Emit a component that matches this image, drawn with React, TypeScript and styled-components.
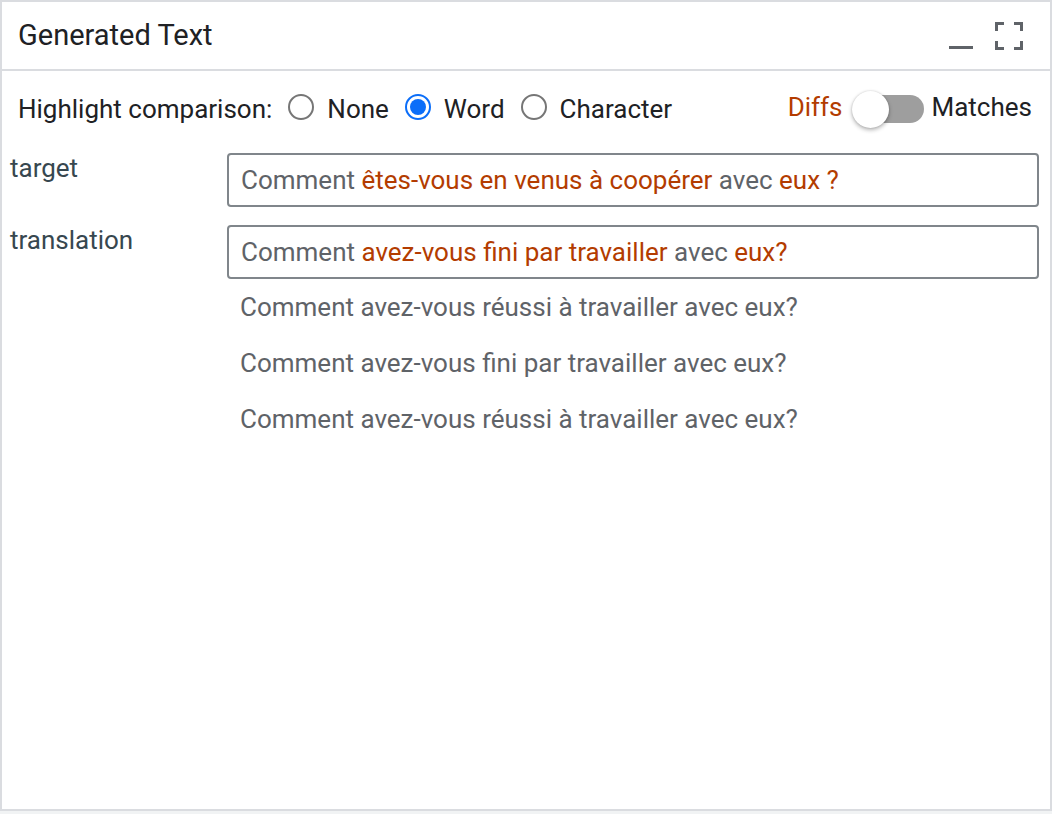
import React from 'react';
import styled, { createGlobalStyle } from 'styled-components';

const GlobalStyle = createGlobalStyle`
  html, body {
    margin: 0;
    padding: 0;
    background: #f1f3f4;
  }
  * {
    box-sizing: border-box;
  }
`;

const HIGHLIGHT = '#b33c00';

type Segment = { text: string; diff?: boolean };

const target: Segment[] = [
  { text: 'Comment ' },
  { text: 'êtes-vous en venus à coopérer', diff: true },
  { text: ' avec ' },
  { text: 'eux ?', diff: true },
];

const translation: Segment[] = [
  { text: 'Comment ' },
  { text: 'avez-vous fini par travailler', diff: true },
  { text: ' avec ' },
  { text: 'eux?', diff: true },
];

const candidates = [
  'Comment avez-vous réussi à travailler avec eux?',
  'Comment avez-vous fini par travailler avec eux?',
  'Comment avez-vous réussi à travailler avec eux?',
];

function App() {
  return (
    <>
      <GlobalStyle />
      <Panel>
        <Header>
          <Title>Generated Text</Title>
          <HeaderIcons>
            <IconButton aria-label="minimize">
              <svg width="26" height="28" viewBox="0 0 26 28">
                <rect x="1" y="24" width="24" height="3" fill="#5f6368" />
              </svg>
            </IconButton>
            <IconButton aria-label="fullscreen">
              <svg width="30" height="30" viewBox="0 0 30 30" fill="#5f6368">
                <path d="M1 1h9v3H4v6H1z" />
                <path d="M29 1h-9v3h6v6h3z" />
                <path d="M1 29h9v-3H4v-6H1z" />
                <path d="M29 29h-9v-3h6v-6h3z" />
              </svg>
            </IconButton>
          </HeaderIcons>
        </Header>
        <Controls>
          <RadioGroup>
            <ControlLabel>Highlight comparison:</ControlLabel>
            <RadioOption>
              <Radio checked={false} />
              <span>None</span>
            </RadioOption>
            <RadioOption>
              <Radio checked />
              <span>Word</span>
            </RadioOption>
            <RadioOption>
              <Radio checked={false} />
              <span>Character</span>
            </RadioOption>
          </RadioGroup>
          <ToggleGroup>
            <ToggleText active>Diffs</ToggleText>
            <Switch>
              <Knob />
            </Switch>
            <ToggleText>Matches</ToggleText>
          </ToggleGroup>
        </Controls>
        <Fields>
          <FieldLabel>target</FieldLabel>
          <FieldBox>
            {target.map((s, i) => (
              <Span key={i} diff={s.diff}>
                {s.text}
              </Span>
            ))}
          </FieldBox>
          <FieldLabel>translation</FieldLabel>
          <div>
            <FieldBox>
              {translation.map((s, i) => (
                <Span key={i} diff={s.diff}>
                  {s.text}
                </Span>
              ))}
            </FieldBox>
            <CandidateList>
              {candidates.map((c, i) => (
                <Candidate key={i}>{c}</Candidate>
              ))}
            </CandidateList>
          </div>
        </Fields>
      </Panel>
    </>
  );
}

export default App;

const Panel = styled.div`
  width: 1052px;
  height: 811px;
  border: 2px solid #dadce0;
  background: #fff;
  font-family: Roboto, 'Liberation Sans', sans-serif;
  display: flex;
  flex-direction: column;
`;

const Header = styled.div`
  height: 69px;
  flex-shrink: 0;
  border-bottom: 2px solid #dadce0;
  display: flex;
  align-items: center;
  justify-content: space-between;
  padding: 0 26px 0 16px;
`;

const Title = styled.div`
  font-size: 29px;
  color: #202124;
  letter-spacing: 0;
  margin-top: -2px;
`;

const HeaderIcons = styled.div`
  display: flex;
  align-items: center;
  gap: 20px;
`;

const IconButton = styled.div`
  display: flex;
  align-items: center;
  svg {
    display: block;
  }
`;

const Controls = styled.div`
  height: 76px;
  display: flex;
  align-items: center;
  justify-content: space-between;
  padding: 0 18px 0 16px;
  font-size: 26px;
  color: #202124;
`;

const RadioGroup = styled.div`
  display: flex;
  align-items: center;
  gap: 16px;
`;

const ControlLabel = styled.span``;

const RadioOption = styled.label`
  display: flex;
  align-items: center;
  gap: 13px;
`;

const Radio = styled.span<{ checked: boolean }>`
  width: 26px;
  height: 26px;
  border-radius: 50%;
  border: 2px solid ${({ checked }) => (checked ? '#0b6ef9' : '#767676')};
  display: inline-flex;
  align-items: center;
  justify-content: center;
  margin-top: -4px;
  &::after {
    content: '';
    width: 16px;
    height: 16px;
    border-radius: 50%;
    background: ${({ checked }) => (checked ? '#0b6ef9' : 'transparent')};
  }
`;

const ToggleGroup = styled.div`
  display: flex;
  align-items: center;
  gap: 8px;
`;

const ToggleText = styled.span<{ active?: boolean }>`
  color: ${({ active }) => (active ? HIGHLIGHT : '#202124')};
  margin-top: -4px;
`;

const Switch = styled.div`
  position: relative;
  width: 66px;
  height: 28px;
  border-radius: 14px;
  background: #9e9e9e;
  margin-left: 7px;
`;

const Knob = styled.div`
  position: absolute;
  left: -6px;
  top: -4px;
  width: 37px;
  height: 37px;
  border-radius: 50%;
  background: #fff;
  box-shadow: 0 2px 4px rgba(0, 0, 0, 0.3), 0 0 2px rgba(0, 0, 0, 0.15);
`;

const Fields = styled.div`
  display: grid;
  grid-template-columns: 217px 1fr;
  row-gap: 18px;
  padding: 6px 11px 0 8px;
`;

const FieldLabel = styled.div`
  font-size: 26px;
  color: #37474f;
  padding-top: 0;
`;

const FieldBox = styled.div`
  height: 54px;
  border: 2px solid #80868b;
  border-radius: 4px;
  padding: 0 12px;
  display: flex;
  align-items: center;
  font-size: 26px;
  color: #5f6368;
  white-space: pre;
`;

const Span = styled.span<{ diff?: boolean }>`
  color: ${({ diff }) => (diff ? HIGHLIGHT : 'inherit')};
`;

const CandidateList = styled.div`
  display: flex;
  flex-direction: column;
`;

const Candidate = styled.div`
  height: 56px;
  display: flex;
  align-items: center;
  padding-left: 13px;
  font-size: 26px;
  color: #5f6368;
`;
